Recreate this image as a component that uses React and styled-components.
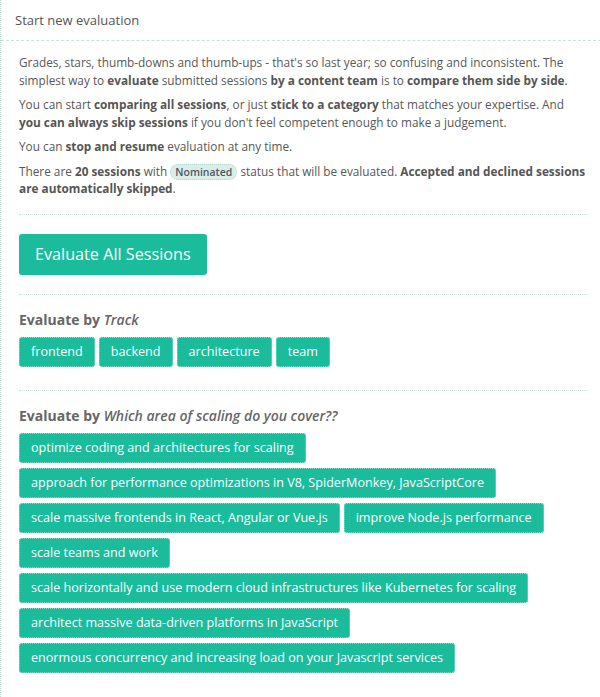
import styled, { createGlobalStyle } from "styled-components";

const GlobalStyle = createGlobalStyle`
  html, body {
    margin: 0;
    padding: 0;
    background: #fff;
    overflow: hidden;
  }
  body {
    font-family: "Open Sans", "Liberation Sans", sans-serif;
    color: #555;
  }
`;

const tracks = ["frontend", "backend", "architecture", "team"];

const areas = [
  "optimize coding and architectures for scaling",
  "approach for performance optimizations in V8, SpiderMonkey, JavaScriptCore",
  "scale massive frontends in React, Angular or Vue.js",
  "improve Node.js performance",
  "scale teams and work",
  "scale horizontally and use modern cloud infrastructures like Kubernetes for scaling",
  "architect massive data-driven platforms in JavaScript",
  "enormous concurrency and increasing load on your Javascript services",
];

const App = () => {
  return (
    <>
      <GlobalStyle />
      <CardDiv>
        <HeaderDiv>Start new evaluation</HeaderDiv>
        <BodyDiv>
          <Para>
            Grades, stars, thumb-downs and thumb-ups - that's so last year; so
            confusing and inconsistent. The simplest way to <b>evaluate</b>{" "}
            submitted sessions <b>by a content team</b> is to{" "}
            <b>compare them side by side</b>.
          </Para>
          <Para>
            You can start <b>comparing all sessions</b>, or just{" "}
            <b>stick to a category</b> that matches your expertise. And{" "}
            <b>you can always skip sessions</b> if you don't feel competent
            enough to make a judgement.
          </Para>
          <Para>
            You can <b>stop and resume</b> evaluation at any time.
          </Para>
          <Para>
            There are <b>20 sessions</b> with <Badge>Nominated</Badge> status
            that will be evaluated.{" "}
            <b>Accepted and declined sessions are automatically skipped</b>.
          </Para>

          <Section $gap={16}>
            <BigButton>Evaluate All Sessions</BigButton>
          </Section>

          <Section $gap={19}>
            <GroupTitle>
              Evaluate by <i>Track</i>
            </GroupTitle>
            <TagList>
              {tracks.map((t) => (
                <TagButton key={t}>{t}</TagButton>
              ))}
            </TagList>
          </Section>

          <Section $gap={23}>
            <GroupTitle>
              Evaluate by <i>Which area of scaling do you cover??</i>
            </GroupTitle>
            <TagList>
              {areas.map((t) => (
                <TagButton key={t}>{t}</TagButton>
              ))}
            </TagList>
          </Section>
          <Section $gap={24} />
        </BodyDiv>
      </CardDiv>
    </>
  );
};

const CardDiv = styled.div`
  width: 605px;
  border-left: 1px dotted #bfdcd6;
`;

const HeaderDiv = styled.div`
  padding: 11px 14px 11px 14px;
  font-size: 13px;
  line-height: 18px;
  color: #555;
  border-bottom: 1px dashed #c6e3dc;
`;

const BodyDiv = styled.div`
  padding: 13px 19px 0 18px;
`;

const Para = styled.p`
  margin: 0 0 7px 0;
  font-size: 11.8px;
  line-height: 17.5px;
  color: #585858;

  b {
    font-weight: 700;
    color: #555;
  }
`;

const Badge = styled.span`
  display: inline-block;
  font-size: 10.5px;
  font-weight: 600;
  line-height: 14px;
  padding: 0 4px;
  border-radius: 8px;
  background: #d9eee8;
  border: 1px dotted #b9d7cf;
  color: #556;
`;

const Section = styled.div`
  border-top: 1px dotted #c9dcd8;
  margin-top: ${(p) => p.$gap}px;
  padding-top: 19px;
`;

const BigButton = styled.button`
  font-family: inherit;
  font-size: 16.2px;
  color: #fff;
  background: #1abc9c;
  border: none;
  border-radius: 3px;
  height: 41px;
  padding: 0 16px;
  cursor: pointer;
`;

const GroupTitle = styled.div`
  font-size: 14px;
  font-weight: 700;
  line-height: 20px;
  color: #666;
  margin-top: -4px;
  margin-bottom: 7px;

  i {
    font-weight: 600;
  }
`;

const TagList = styled.div`
  display: flex;
  flex-wrap: wrap;
  gap: 5px 4px;
`;

const TagButton = styled.button`
  font-family: inherit;
  font-size: 12.6px;
  color: #fff;
  background: #1abc9c;
  border: 1px dotted #8fd9c8;
  border-radius: 3px;
  height: 30px;
  padding: 0 11px;
  cursor: pointer;
`;

export default App;
